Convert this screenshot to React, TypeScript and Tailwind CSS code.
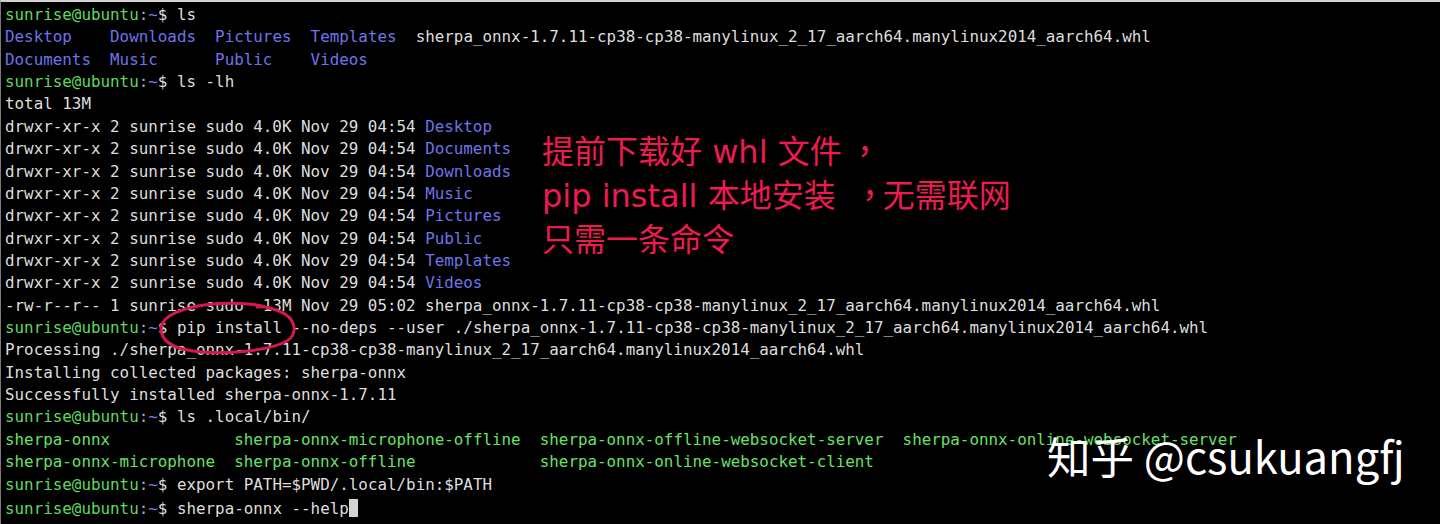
import React from "react";

const WHL = "sherpa_onnx-1.7.11-cp38-cp38-manylinux_2_17_aarch64.manylinux2014_aarch64.whl";

function Prompt() {
  return (
    <>
      <span className="text-[#5fd85f]">sunrise@ubuntu</span>
      <span className="text-[#a3a8c8]">:</span>
      <span className="text-[#7c82e6]">~</span>
      <span className="text-[#dedede]">$ </span>
    </>
  );
}

function Line({ children }: { children?: React.ReactNode }) {
  return <div className="h-[22.36px] leading-[22.36px] whitespace-pre">{children}</div>;
}

const B = ({ t }: { t: string }) => <span className="text-[#6f74ea]">{t}</span>;
const Gx = ({ t }: { t: string }) => <span className="text-[#68e068]">{t}</span>;

const dirs = ["Desktop", "Documents", "Downloads", "Music", "Pictures", "Public", "Templates", "Videos"];

const commaFont = { fontFamily: '"Noto Sans CJK TC", sans-serif' };

export default function App() {
  return (
    <div className="relative h-[524px] w-[1440px] overflow-hidden bg-black border-t-2 border-[#d2d2d2] border-l border-l-[#7a7a7a]">
      <div
        className="pl-[4px] pt-[2px] text-[15.86px] text-[#dedede]"
        style={{ fontFamily: '"DejaVu Sans Mono", "Liberation Mono", monospace' }}
      >
        <Line><Prompt />ls</Line>
        <Line>
          <B t="Desktop" />{"    "}<B t="Downloads" />{"  "}<B t="Pictures" />{"  "}<B t="Templates" />{"  "}{WHL}
        </Line>
        <Line>
          <B t="Documents" />{"  "}<B t="Music" />{"      "}<B t="Public" />{"    "}<B t="Videos" />
        </Line>
        <Line><Prompt />ls -lh</Line>
        <Line>total 13M</Line>
        {dirs.map((d) => (
          <Line key={d}>
            {"drwxr-xr-x 2 sunrise sudo 4.0K Nov 29 04:54 "}<B t={d} />
          </Line>
        ))}
        <Line>{"-rw-r--r-- 1 sunrise sudo  13M Nov 29 05:02 " + WHL}</Line>
        <Line><Prompt />{"pip install --no-deps --user ./" + WHL}</Line>
        <Line>{"Processing ./" + WHL}</Line>
        <Line>Installing collected packages: sherpa-onnx</Line>
        <Line>Successfully installed sherpa-onnx-1.7.11</Line>
        <Line><Prompt />ls .local/bin/</Line>
        <Line>
          <Gx t="sherpa-onnx" />{"             "}<Gx t="sherpa-onnx-microphone-offline" />{"  "}
          <Gx t="sherpa-onnx-offline-websocket-server" />{"  "}<Gx t="sherpa-onnx-online-websocket-server" />
        </Line>
        <Line>
          <Gx t="sherpa-onnx-microphone" />{"  "}<Gx t="sherpa-onnx-offline" />{"             "}
          <Gx t="sherpa-onnx-online-websocket-client" />
        </Line>
        <Line><Prompt />export PATH=$PWD/.local/bin:$PATH</Line>
        <Line>
          <Prompt />sherpa-onnx --help
          <span className="inline-block h-[18px] w-[9px] translate-y-[3px] bg-[#d4d4d4] align-baseline" />
        </Line>
      </div>

      {/* annotation */}
      <div
        className="absolute left-[541px] top-[128px] text-[32px] leading-[44px] text-[#ee1a50] whitespace-pre"
        style={{ fontFamily: '"DejaVu Sans", "Noto Sans CJK SC", sans-serif' }}
      >
        <div className="h-[44px]">
          提前下载好 whl 文件
          <span className="inline-block w-[39px] text-right leading-none" style={commaFont}>，</span>
        </div>
        <div className="h-[44px]">
          pip install 本地安装
          <span className="inline-block w-[47px] text-right leading-none" style={commaFont}>
            <span className="inline-block translate-x-[3px]">，</span>
          </span>
          无需联网
        </div>
        <div className="h-[44px]">只需一条命令</div>
      </div>

      {/* hand-drawn loop */}
      <svg className="pointer-events-none absolute left-0 top-0" width="1440" height="524" viewBox="0 0 1440 524">
        <path
          d="M 268 306 C 245 298, 195 300, 172 312 C 152 322, 158 341, 182 347 C 215 355, 268 349, 286 339 C 298 331, 294 316, 280 310 C 272 306, 262 304, 256 305"
          fill="none"
          stroke="#d4174c"
          strokeWidth="3"
          strokeLinecap="round"
        />
      </svg>

      {/* watermark */}
      <div
        className="absolute left-[1046px] top-[426px] text-[43.5px] leading-[56px] text-white whitespace-pre"
        style={{ fontFamily: '"Noto Sans CJK SC", sans-serif' }}
      >
        知乎 @csukuangfj
      </div>
    </div>
  );
}
